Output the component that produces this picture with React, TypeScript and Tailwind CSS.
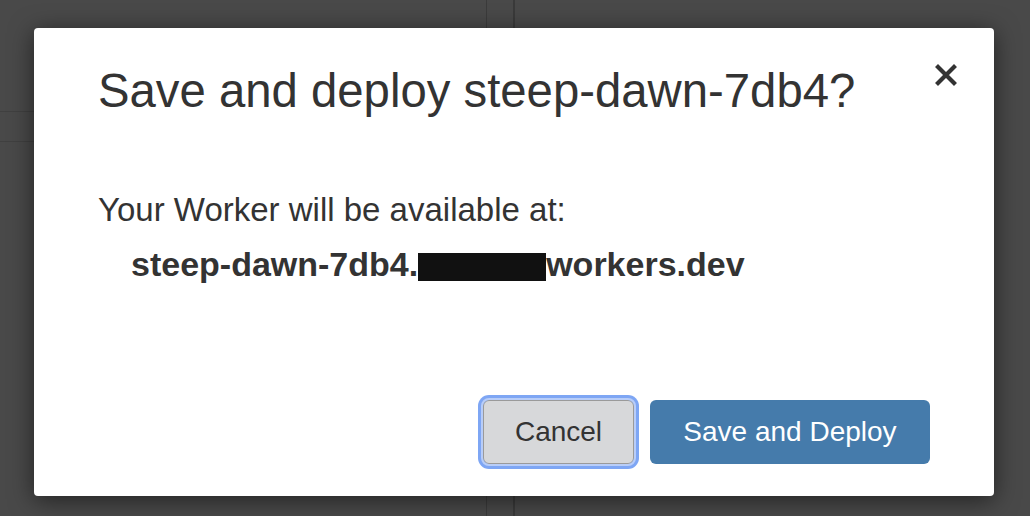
import React from 'react';

function CloseIcon() {
  return (
    <svg width="24" height="24" viewBox="0 0 24 24" fill="none">
      <path d="M4 4L20 20M20 4L4 20" stroke="#333333" strokeWidth="4.2" strokeLinecap="square" />
    </svg>
  );
}

export default function App() {
  return (
    <div
      className="relative w-[1030px] h-[516px] overflow-hidden bg-[#494949]"
      style={{ fontFamily: '"Liberation Sans", Arial, sans-serif' }}
    >
      {/* dimmed app behind the dialog */}
      <div className="flex h-full">
        <div className="w-[487px] border-r border-[#3b3b3b] flex flex-col">
          <div className="h-[112px] border-b border-[#404040]" />
          <div className="h-[30px] border-b border-[#404040]" />
        </div>
        <div className="w-[28px] border-r-2 border-[#3a3a3a]" />
        <div className="flex-1" />
      </div>

      <div className="absolute inset-0 flex items-start pl-[34px] pt-[28px]">
        <div className="w-[960px] h-[468px] bg-white rounded-[4px] shadow-[0_4px_24px_rgba(0,0,0,0.55)] flex flex-col text-[#333333]">
          <div className="flex items-start justify-between pl-[64px] pr-[36px] pt-[36px]">
            <h2 className="text-[47.3px] leading-[54px] font-normal">Save and deploy steep-dawn-7db4?</h2>
            <button className="-mt-[1px] w-[24px] h-[24px] flex items-center justify-center">
              <CloseIcon />
            </button>
          </div>

          <div className="pl-[64px] pt-[73px] text-[33px] leading-[37px]">
            <p>Your Worker will be available at:</p>
            <p className="pl-[33px] mt-[18px] text-[34px] font-bold flex items-center">
              <span>steep-dawn-7db4.</span>
              <span className="inline-block w-[128px] h-[28px] bg-[#111111] mt-[4px]" />
              <span>workers.dev</span>
            </p>
          </div>

          <div className="mt-auto flex justify-end gap-[16px] pr-[64px] pb-[32px]">
            <button className="h-[64px] w-[151px] rounded-[6px] bg-[#d7d8da] border border-[#9a9a9a] text-[28px] text-[#333333] ring-[5px] ring-[#7ea6f4] outline outline-2 outline-[#b8cdf8]">
              Cancel
            </button>
            <button className="h-[64px] w-[280px] rounded-[6px] bg-[#457bab] text-[28px] text-white">
              Save and Deploy
            </button>
          </div>
        </div>
      </div>
    </div>
  );
}
